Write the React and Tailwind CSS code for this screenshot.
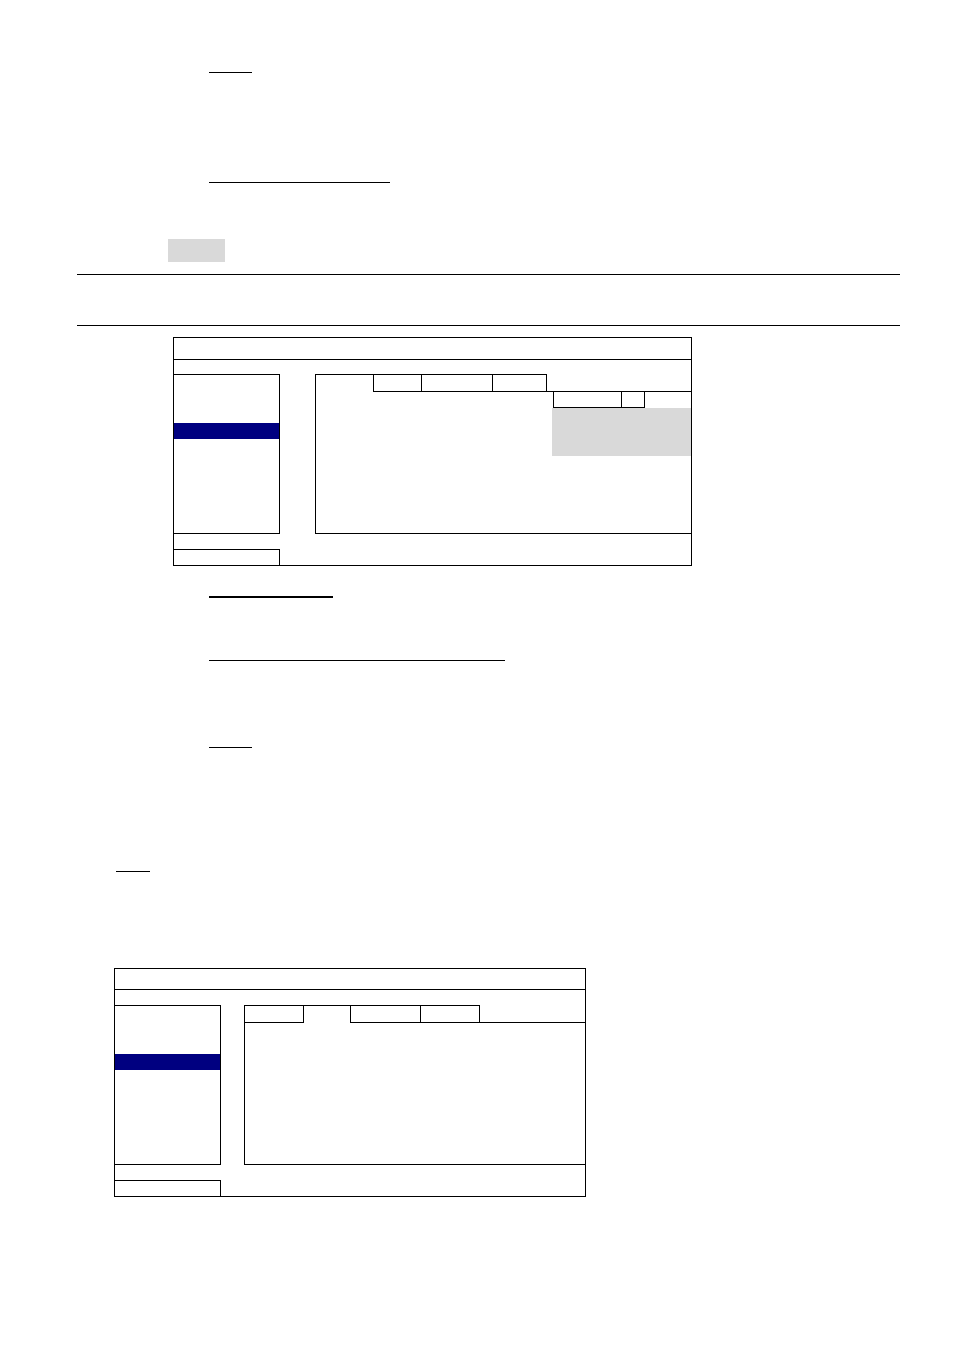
export default function App() {
  return (
    <div className="w-[954px] h-[1350px] bg-white flex flex-col items-start" style={{ fontFamily: '"Liberation Sans", Arial, sans-serif' }}>
      {/* underline 1 */}
      <div className="ml-[209px] mt-[72px] w-[43px] h-px bg-black" />
      {/* underline 2 */}
      <div className="ml-[209px] mt-[109px] w-[181px] h-px bg-black" />
      {/* gray block */}
      <div className="ml-[168px] mt-[56px] w-[57px] h-[23px] bg-[#d9d9d9]" />
      {/* rules */}
      <div className="ml-[77px] mt-[12px] w-[823px] h-px bg-black" />
      <div className="ml-[77px] mt-[50px] w-[823px] h-px bg-black" />

      {/* screen 1 */}
      <div className="ml-[173px] mt-[11px] w-[519px] h-[229px] border border-black flex flex-col">
        <div className="h-[22px] shrink-0 border-b border-black" />
        <div className="h-[14px] shrink-0" />
        <div className="flex h-[160px] shrink-0">
          <div className="w-[106px] shrink-0 border-t border-r border-b border-black pt-[48px]">
            <div className="h-[16px] bg-[#000080]" />
          </div>
          <div className="w-[35px] shrink-0" />
          <div className="flex-1 border-l border-b border-black flex flex-col">
            <div className="flex h-[18px] shrink-0">
              <div className="w-[58px] border-t border-r border-black" />
              <div className="w-[48px] border-t border-r border-b border-black" />
              <div className="w-[71px] border-t border-r border-b border-black" />
              <div className="w-[54px] border-t border-r border-b border-black" />
              <div className="flex-1 border-b border-black" />
            </div>
            <div className="flex h-[16px] ml-[237px] shrink-0">
              <div className="w-[69px] border-l border-r border-b border-black" />
              <div className="w-[23px] border-r border-b border-black" />
              <div className="flex-1" />
            </div>
            <div className="ml-[236px] w-[139px] h-[48px] bg-[#d9d9d9]" />
          </div>
        </div>
        <div className="h-[15px] shrink-0" />
        <div className="w-[106px] h-[16px] shrink-0 border-t border-r border-black" />
      </div>

      {/* underline 3 */}
      <div className="ml-[209px] mt-[30px] w-[124px] h-[2px] bg-black" />
      {/* underline 4 */}
      <div className="ml-[209px] mt-[62px] w-[296px] h-px bg-black" />
      {/* underline 5 */}
      <div className="ml-[209px] mt-[86px] w-[43px] h-px bg-black" />
      {/* underline 6 */}
      <div className="ml-[116px] mt-[123px] w-[34px] h-px bg-black" />

      {/* screen 2 */}
      <div className="ml-[114px] mt-[96px] w-[472px] h-[229px] border border-black flex flex-col">
        <div className="h-[21px] shrink-0 border-b border-black" />
        <div className="h-[15px] shrink-0" />
        <div className="flex h-[160px] shrink-0">
          <div className="w-[106px] shrink-0 border-t border-r border-b border-black pt-[48px]">
            <div className="h-[16px] bg-[#000080]" />
          </div>
          <div className="w-[23px] shrink-0" />
          <div className="flex-1 border-l border-b border-black flex flex-col">
            <div className="flex h-[18px] shrink-0">
              <div className="w-[59px] border-t border-r border-b border-black" />
              <div className="w-[47px] border-t border-r border-black" />
              <div className="w-[70px] border-t border-r border-b border-black" />
              <div className="w-[59px] border-t border-r border-b border-black" />
              <div className="flex-1 border-b border-black" />
            </div>
          </div>
        </div>
        <div className="h-[15px] shrink-0" />
        <div className="w-[106px] h-[16px] shrink-0 border-t border-r border-black" />
      </div>
    </div>
  );
}
